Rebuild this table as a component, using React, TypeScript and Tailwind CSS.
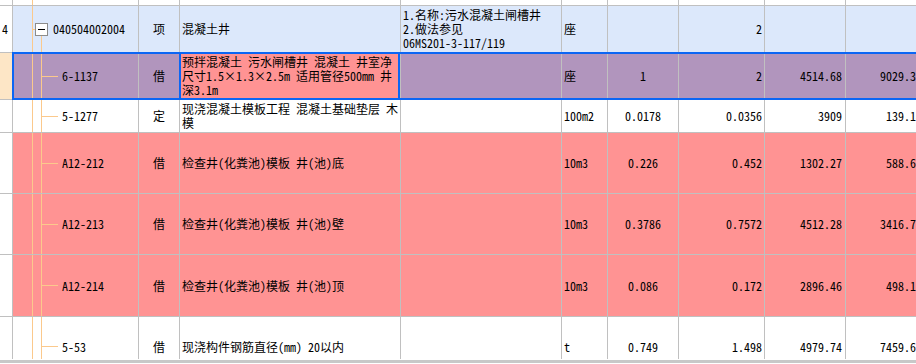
import clsx from "clsx";

const LINE = "#fbc98c";

type Row = {
  code: string;
  kind: string;
  name: string[];
  feat?: string[];
  unit: string;
  q1?: string;
  q2: string;
  price?: string;
  total?: string;
  bg: string;
  h: string;
  parent?: boolean;
  head?: string;
  selected?: boolean;
};

const rows: Row[] = [
  {
    code: "040504002004",
    kind: "项",
    name: ["混凝土井"],
    feat: ["1.名称:污水混凝土闸槽井", "2.做法参见", "06MS201-3-117/119"],
    unit: "座",
    q2: "2",
    bg: "bg-[#dce8fb]",
    h: "h-[47px]",
    parent: true,
    head: "4",
  },
  {
    code: "6-1137",
    kind: "借",
    name: ["预拌混凝土 污水闸槽井 混凝土 井室净", "尺寸1.5×1.3×2.5m 适用管径500mm 井", "深3.1m"],
    unit: "座",
    q1: "1",
    q2: "2",
    price: "4514.68",
    total: "9029.36",
    bg: "bg-[#b195bd]",
    h: "h-[47px]",
    selected: true,
  },
  {
    code: "5-1277",
    kind: "定",
    name: ["现浇混凝土模板工程 混凝土基础垫层 木", "模"],
    unit: "100m2",
    q1: "0.0178",
    q2: "0.0356",
    price: "3909",
    total: "139.14",
    bg: "bg-white",
    h: "h-[33px]",
  },
  {
    code: "A12-212",
    kind: "借",
    name: ["检查井(化粪池)模板 井(池)底"],
    unit: "10m3",
    q1: "0.226",
    q2: "0.452",
    price: "1302.27",
    total: "588.63",
    bg: "bg-[#ff9393]",
    h: "h-[61px]",
  },
  {
    code: "A12-213",
    kind: "借",
    name: ["检查井(化粪池)模板 井(池)壁"],
    unit: "10m3",
    q1: "0.3786",
    q2: "0.7572",
    price: "4512.28",
    total: "3416.70",
    bg: "bg-[#ff9393]",
    h: "h-[61px]",
  },
  {
    code: "A12-214",
    kind: "借",
    name: ["检查井(化粪池)模板 井(池)顶"],
    unit: "10m3",
    q1: "0.086",
    q2: "0.172",
    price: "2896.46",
    total: "498.19",
    bg: "bg-[#ff9393]",
    h: "h-[62px]",
  },
  {
    code: "5-53",
    kind: "借",
    name: ["现浇构件钢筋直径(mm) 20以内"],
    unit: "t",
    q1: "0.749",
    q2: "1.498",
    price: "4979.74",
    total: "7459.65",
    bg: "bg-white",
    h: "h-[60px]",
  },
];

const cell = "shrink-0 border-r border-[#c0c0c0] flex items-center";

function TreeCell({ row }: { row: Row }) {
  return (
    <div className={clsx("w-[126px] shrink-0 border-r border-[#c0c0c0] flex items-stretch")}>
      <div className="w-[20px] shrink-0 border-r border-[#fbc98c]" />
      {row.parent ? (
        <div className="w-[15px] shrink-0 flex flex-col">
          <div className="flex-1" />
          <div className="flex items-center h-[13px]">
            <div className="w-[2px] h-px bg-[#fbc98c]" />
            <div className="w-[13px] h-[13px] border border-[#8c8c8c] bg-white flex items-center justify-center">
              <div className="w-[7px] h-px bg-black" />
            </div>
          </div>
          <div className="flex-1 ml-[8px] w-px bg-[#fbc98c]" />
        </div>
      ) : (
        <>
          <div className="w-[9px] shrink-0 border-r border-[#fbc98c]" />
          <div className="self-center w-[16px] h-px bg-[#fbc98c]" />
        </>
      )}
      <span className={clsx("self-center whitespace-nowrap", row.parent ? "pl-[5px]" : "pl-[4px]")}>{row.code}</span>
    </div>
  );
}

function DataRow({ row }: { row: Row }) {
  return (
    <div className={clsx("relative flex shrink-0 border-b border-[#c0c0c0]", row.h)}>
      <div className={clsx(cell, "w-[13px] pl-[2px]", row.selected ? "bg-[#fde6c6]" : "bg-white")}>{row.head}</div>
      <div className={clsx("flex", row.bg)}>
        <TreeCell row={row} />
        <div className={clsx(cell, "w-[41px] justify-center")}>{row.kind}</div>
        <div className={clsx(cell, "relative w-[221px] pl-[2px]", row.selected && "bg-[#ff9393]")}>
          <div className="whitespace-nowrap">
            {row.name.map((l, i) => (
              <div key={i}>{l}</div>
            ))}
          </div>
          {row.selected && (
            <div className="absolute -left-px top-0 bottom-0 right-0 border-x-2 border-[#0b66f4] pointer-events-none" />
          )}
        </div>
        <div className={clsx(cell, "w-[161px] pl-[2px]")}>
          <div className="whitespace-nowrap">
            {row.feat?.map((l, i) => (
              <div key={i}>{l}</div>
            ))}
          </div>
        </div>
        <div className={clsx(cell, "w-[46px] pl-[2px]")}>{row.unit}</div>
        <div className={clsx(cell, "w-[71px] justify-center")}>{row.q1}</div>
        <div className={clsx(cell, "w-[86px] justify-end pr-[2px]")}>{row.q2}</div>
        <div className={clsx(cell, "w-[81px] justify-end pr-[3px]")}>{row.price}</div>
        <div className={clsx(cell, "w-[80px] justify-end pr-[3px]")}>{row.total}</div>
      </div>
      {row.selected && (
        <div className="absolute left-[12px] -right-[20px] -top-px bottom-[-1px] border-2 border-[#0b66f4] pointer-events-none" />
      )}
    </div>
  );
}

export default function App() {
  return (
    <div className="w-[916px] h-[364px] overflow-hidden bg-white text-black text-[12px] leading-[14px] font-['Noto_Sans_Mono_CJK_SC','Noto_Sans_CJK_SC',monospace]">
      <div className="h-[359px] overflow-hidden flex flex-col">
        <div className="flex shrink-0 h-[6px] border-b border-[#c0c0c0]">
          <div className={clsx(cell, "w-[13px]")} />
          <div className="w-[126px] shrink-0 border-r border-[#c0c0c0] flex">
            <div className="w-[20px] border-r border-[#fbc98c]" />
          </div>
          <div className={clsx(cell, "w-[41px]")} />
          <div className={clsx(cell, "w-[221px]")} />
          <div className={clsx(cell, "w-[161px]")} />
          <div className={clsx(cell, "w-[46px]")} />
          <div className={clsx(cell, "w-[71px]")} />
          <div className={clsx(cell, "w-[86px]")} />
          <div className={clsx(cell, "w-[81px]")} />
          <div className={clsx(cell, "w-[80px]")} />
        </div>
        {rows.map((r, i) => (
          <DataRow key={i} row={r} />
        ))}
      </div>
      <div className="h-px bg-white" />
      <div className="h-[3px] bg-[#c8c8c8]" />
    </div>
  );
}
